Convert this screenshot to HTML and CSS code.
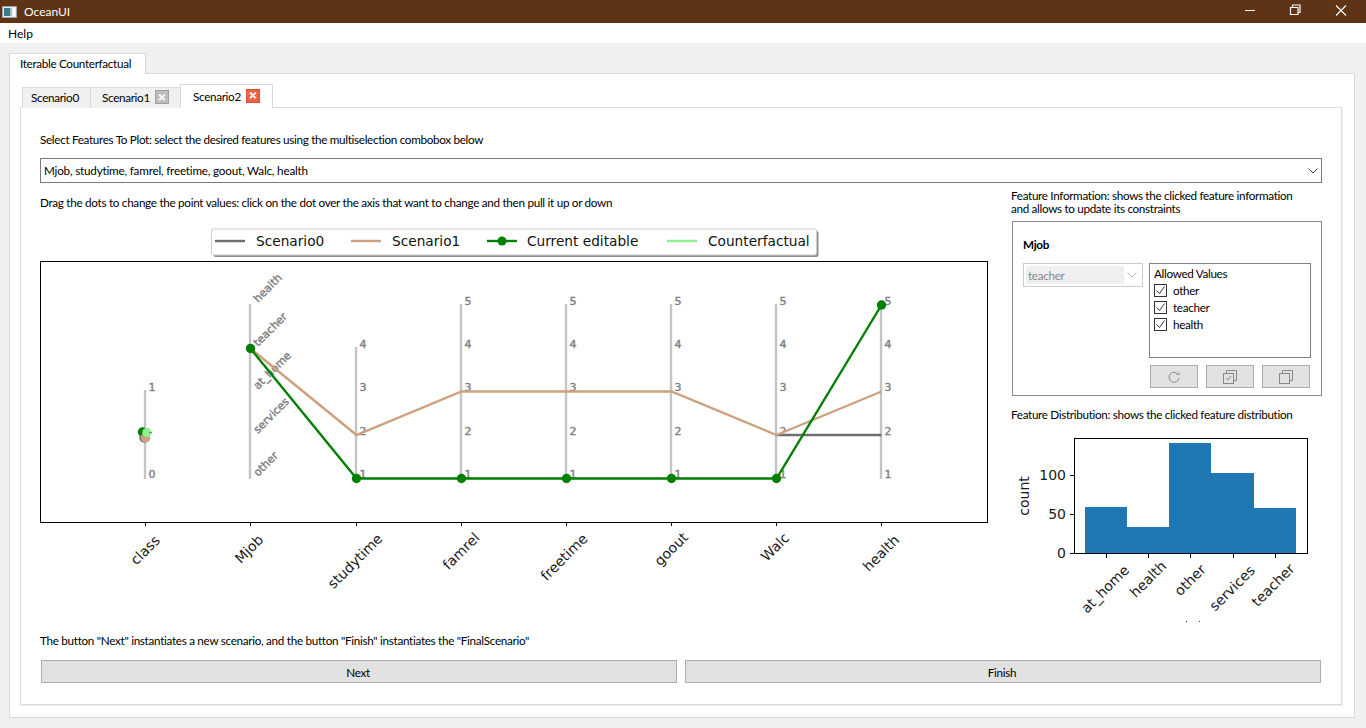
FILE: index.html
```html
<!DOCTYPE html>
<html lang="en">
<head>
  <meta charset="UTF-8">
  <title>OceanUI</title>
  <link rel="stylesheet" href="styles.css">
</head>
<body>
  <!-- Window chrome -->
  <div class="titlebar">
    <svg class="app-icon" width="16" height="14" viewBox="0 0 16 14">
      <rect x="0.5" y="1.5" width="14" height="11" fill="#e8eef0" stroke="#9aa4a8"/>
      <rect x="2" y="3" width="6" height="8" fill="#3d7c86"/>
      <rect x="8" y="3" width="2" height="8" fill="#a9c6c4"/>
      <rect x="11" y="3" width="2" height="8" fill="#ffffff"/>
    </svg>
    <span class="app-name">OceanUI</span>
    <div class="win-controls">
      <svg width="166" height="23" viewBox="0 0 166 23" fill="none" stroke="#fff">
        <path d="M45 10.5h10"/>
        <path d="M90.5 14.5v-7h7.5v7z M92.5 7v-2h7.5v7.5h-2" stroke-width="1.2"/>
        <path d="M136 5.5l10 10M146 5.5l-10 10" stroke-width="1.1"/>
      </svg>
    </div>
  </div>
  <div class="menubar"><span>Help</span></div>

  <div class="main">
    <div class="tab-row">
      <div class="tab outer-tab">Iterable Counterfactual</div>
    </div>
    <div class="outer-pane">
      <div class="tab-row inner-tabs">
        <div class="tab sub-tab first">Scenario0</div>
        <div class="tab sub-tab second">Scenario1<span class="close grey">&#10005;</span></div>
        <div class="tab sub-tab current">Scenario2<span class="close red">&#10005;</span></div>
      </div>
      <div class="inner-pane">
        <p class="label">Select Features To Plot: select the desired features using the multiselection combobox below</p>
        <div class="feature-combo">
          <span>Mjob, studytime, famrel, freetime, goout, Walc, health</span>
          <svg width="10" height="6" viewBox="0 0 10 6" fill="none" stroke="#444"><path d="M0.5 0.5l4.5 4.5 4.5-4.5"/></svg>
        </div>

        <div class="work">
          <div class="plot-col">
            <p class="label">Drag the dots to change the point values: click on the dot over the axis that want to change and then pull it up or down</p>
            <svg class="plot" width="960" height="400" viewBox="40 225 960 400">
              <!-- legend -->
              <rect x="213.5" y="231" width="605" height="26" rx="2" fill="#8f8f8f"/>
              <rect x="211.5" y="229" width="605" height="26" rx="2" fill="#fff" stroke="#ccc"/>
              <path d="M215 241h30" stroke="#6e6e6e" stroke-width="2.4"/>
              <text class="legend-text" x="256" y="246">Scenario0</text>
              <path d="M351 241h30" stroke="#cda07f" stroke-width="2.4"/>
              <text class="legend-text" x="392" y="246">Scenario1</text>
              <path d="M487 241h30" stroke="#008000" stroke-width="2.4"/>
              <circle cx="502" cy="241" r="4.5" fill="#008000"/>
              <text class="legend-text" x="527" y="246">Current editable</text>
              <path d="M667 241h30" stroke="#90f090" stroke-width="2.4"/>
              <text class="legend-text" x="708" y="246">Counterfactual</text>

              <!-- frame and ticks -->
              <rect x="40.5" y="261.5" width="947" height="261" fill="none" stroke="#000"/>
              <path d="M145.5 522v4M250.5 522v4M356.5 522v4M461.5 522v4M566.5 522v4M671.5 522v4M776.5 522v4M881.5 522v4" stroke="#000"/>

              <!-- parallel axes -->
              <g stroke="#c4c4c4" stroke-width="2.4">
                <path d="M145 390v89M250 304v175M356 347v132M461 304v175M566 304v175M671 304v175M776 304v175M881 304v175"/>
              </g>

              <!-- axis values -->
              <g class="axis-text">
                <text x="148.5" y="391">1</text><text x="148.5" y="478">0</text>
                <text x="359.5" y="348">4</text><text x="359.5" y="391">3</text><text x="359.5" y="435">2</text><text x="359.5" y="478">1</text>
                <text x="464.5" y="305">5</text><text x="464.5" y="348">4</text><text x="464.5" y="391">3</text><text x="464.5" y="435">2</text><text x="464.5" y="478">1</text>
                <text x="569.5" y="305">5</text><text x="569.5" y="348">4</text><text x="569.5" y="391">3</text><text x="569.5" y="435">2</text><text x="569.5" y="478">1</text>
                <text x="674.5" y="305">5</text><text x="674.5" y="348">4</text><text x="674.5" y="391">3</text><text x="674.5" y="435">2</text><text x="674.5" y="478">1</text>
                <text x="779.5" y="305">5</text><text x="779.5" y="348">4</text><text x="779.5" y="391">3</text><text x="779.5" y="435">2</text><text x="779.5" y="478">1</text>
                <text x="884.5" y="305">5</text><text x="884.5" y="348">4</text><text x="884.5" y="391">3</text><text x="884.5" y="435">2</text><text x="884.5" y="478">1</text>
                <text transform="translate(258 303) rotate(-45)">health</text>
                <text transform="translate(258 347) rotate(-45)">teacher</text>
                <text transform="translate(258 390) rotate(-45)">at_home</text>
                <text transform="translate(258 434) rotate(-45)">services</text>
                <text transform="translate(258 477) rotate(-45)">other</text>
              </g>

              <!-- scenario lines -->
              <g fill="none" stroke-width="2.4">
                <path d="M776.5 435H881.5" stroke="#6e6e6e"/>
                <path d="M250.5 348.5L356.5 435L461.5 391.5H671.5L776.5 435L881.5 391.5" stroke="#cda07f"/>
                <path d="M250.5 348.5L356.5 478.5H776.5L881.5 305" stroke="#008000"/>
              </g>
              <g fill="#008000">
                <circle cx="250.5" cy="348.5" r="4.7"/><circle cx="356.5" cy="478.5" r="4.7"/><circle cx="461.5" cy="478.5" r="4.7"/>
                <circle cx="566.5" cy="478.5" r="4.7"/><circle cx="671.5" cy="478.5" r="4.7"/><circle cx="776.5" cy="478.5" r="4.7"/>
                <circle cx="881.5" cy="305" r="4.7"/>
              </g>

              <!-- stacked dots on class axis -->
              <circle cx="142.5" cy="432" r="4.7" fill="#008000"/>
              <circle cx="144" cy="438" r="4.7" fill="#6e6e6e"/>
              <circle cx="145.5" cy="438" r="4.7" fill="#cda07f"/>
              <circle cx="147" cy="432.5" r="4.7" fill="#90f090"/>
              <path d="M149 432.5h3" stroke="#808080"/>

              <!-- axis names -->
              <g class="axis-name">
                <text transform="translate(145 550) rotate(-45)">class</text>
                <text transform="translate(249 549) rotate(-45)">Mjob</text>
                <text transform="translate(355 561) rotate(-45)">studytime</text>
                <text transform="translate(461 551) rotate(-45)">famrel</text>
                <text transform="translate(564 557) rotate(-45)">freetime</text>
                <text transform="translate(671 549) rotate(-45)">goout</text>
                <text transform="translate(775 547) rotate(-45)">Walc</text>
                <text transform="translate(881 553) rotate(-45)">health</text>
              </g>
            </svg>
          </div>

          <div class="info-col">
            <p class="label tight">Feature Information: shows the clicked feature information<br>and allows to update its constraints</p>
            <div class="info-box">
              <div class="info-title">Mjob</div>
              <div class="info-row">
                <div class="value-combo">
                  <span class="value-text">teacher</span>
                  <svg width="10" height="6" viewBox="0 0 10 6" fill="none" stroke="#b8b8b8"><path d="M0.5 0.5l4.5 4.5 4.5-4.5"/></svg>
                </div>
                <div class="allowed">
                  <div class="allowed-list">
                    <div class="allowed-head">Allowed Values</div>
                    <label class="check"><span class="box"><svg width="11" height="11" viewBox="0 0 11 11" fill="none" stroke="#333"><path d="M1.5 5.5l3 3 5-7"/></svg></span>other</label>
                    <label class="check"><span class="box"><svg width="11" height="11" viewBox="0 0 11 11" fill="none" stroke="#333"><path d="M1.5 5.5l3 3 5-7"/></svg></span>teacher</label>
                    <label class="check"><span class="box"><svg width="11" height="11" viewBox="0 0 11 11" fill="none" stroke="#333"><path d="M1.5 5.5l3 3 5-7"/></svg></span>health</label>
                  </div>
                  <div class="small-btns">
                    <div class="btn small">
                      <svg width="14" height="14" viewBox="0 0 14 14" fill="none" stroke="#888"><path d="M11.5 5A5 5 0 1 0 12 8"/><path d="M9.5 4.5h3v-2" stroke="#999"/></svg>
                    </div>
                    <div class="btn small">
                      <svg width="14" height="14" viewBox="0 0 14 14" fill="none" stroke="#888"><path d="M3.5 3.5v-3h10v10h-3"/><rect x="0.5" y="3.5" width="10" height="10"/><path d="M3 8l2 2 3-4"/></svg>
                    </div>
                    <div class="btn small">
                      <svg width="14" height="14" viewBox="0 0 14 14" fill="none" stroke="#888"><path d="M3.5 3.5v-3h10v10h-3"/><rect x="0.5" y="3.5" width="10" height="10"/></svg>
                    </div>
                  </div>
                </div>
              </div>
            </div>
            <p class="label dist-label">Feature Distribution: shows the clicked feature distribution</p>
            <svg class="hist" width="310" height="195" viewBox="1012 430 310 195">
              <g fill="#1f77b4">
                <rect x="1085" y="507" width="42" height="46"/>
                <rect x="1127" y="527" width="42" height="26"/>
                <rect x="1169" y="443" width="42" height="110"/>
                <rect x="1211" y="473" width="43" height="80"/>
                <rect x="1254" y="508" width="42" height="45"/>
              </g>
              <rect x="1074.5" y="438.5" width="233" height="115" fill="none" stroke="#000"/>
              <path d="M1070 553.5h4M1070 514.5h4M1070 475.5h4M1106.5 554v4M1148.5 554v4M1190.5 554v4M1233.5 554v4M1275.5 554v4" stroke="#000"/>
              <g class="axis-name">
                <text class="end" x="1066" y="558">0</text>
                <text class="end" x="1066" y="519">50</text>
                <text class="end" x="1066" y="480">100</text>
                <text transform="translate(1024 496) rotate(-90)">count</text>
                <text transform="translate(1105 589) rotate(-45)">at_home</text>
                <text transform="translate(1148 579) rotate(-45)">health</text>
                <text transform="translate(1190 580) rotate(-45)">other</text>
                <text transform="translate(1232 588) rotate(-45)">services</text>
                <text transform="translate(1273 585) rotate(-45)">teacher</text>
              </g>
              <path d="M1186 621.5h1M1199 621.5h1" stroke="#333"/>
            </svg>
          </div>
        </div>

        <p class="label note">The button "Next" instantiates a new scenario, and the button "Finish" instantiates the "FinalScenario"</p>
        <div class="actions">
          <div class="btn action">Next</div>
          <div class="btn action">Finish</div>
        </div>
      </div>
    </div>
  </div>
</body>
</html>
```

FILE: styles.css
```css
* {
  box-sizing: border-box;
}

html, body {
  height: 100%;
}

body {
  margin: 0;
  display: flex;
  flex-direction: column;
  overflow: hidden;
  background: #f0f0f0;
  color: #000;
  font-family: Lato, "Open Sans", sans-serif;
  font-size: 11.7px;
  letter-spacing: -0.32px;
}

p {
  margin: 0;
}

svg {
  display: block;
}

/* window chrome */
.titlebar {
  height: 23px;
  display: flex;
  align-items: center;
  background: #5e3316;
  color: #fff;
  padding-left: 2px;
}

.app-icon {
  margin-right: 6px;
}

.app-name {
  font-size: 12px;
  letter-spacing: 0;
}

.win-controls {
  margin-left: auto;
}

.menubar {
  height: 20px;
  background: #fff;
  padding-left: 8px;
  font-size: 12px;
  letter-spacing: 0;
  line-height: 21px;
}

/* tabs */
.main {
  flex: 1;
  display: flex;
  flex-direction: column;
  padding: 10px 11px 10px 9px;
}

.tab-row {
  display: flex;
  align-items: flex-end;
}

.tab {
  display: flex;
  align-items: center;
  background: #f0f0f0;
  border: 1px solid #d9d9d9;
  border-bottom: none;
}

.outer-tab {
  width: 137px;
  height: 21px;
  margin-bottom: -1px;
  padding: 0 0 2px 10px;
  background: #fff;
  position: relative;
  z-index: 1;
}

.outer-pane {
  flex: 1;
  display: flex;
  flex-direction: column;
  background: #fff;
  border: 1px solid #d9d9d9;
  padding: 10px 12px 12px 10px;
}

.inner-tabs {
  height: 24px;
  margin-bottom: -1px;
  padding-left: 2px;
  position: relative;
  z-index: 1;
}

.sub-tab {
  height: 21px;
  padding-bottom: 2px;
  margin-left: -1px;
}

.sub-tab.first {
  width: 69px;
  margin-left: 0;
  padding-left: 8px;
}

.sub-tab.second {
  width: 91px;
  padding-left: 11px;
}

.sub-tab.current {
  width: 93px;
  height: 24px;
  padding-left: 12px;
  padding-bottom: 2px;
  background: #fff;
}

.close {
  width: 14px;
  height: 14px;
  margin-left: 5px;
  display: flex;
  align-items: center;
  justify-content: center;
  color: #fff;
  font-size: 10px;
  font-weight: 700;
  font-family: "DejaVu Sans", sans-serif;
  -webkit-text-stroke: 0.5px #fff;
}

.close.grey {
  background: #bdbdbd;
  border: 1px solid #a0a0a0;
}

.close.red {
  background: #e8654a;
  border: 1px solid #d9502f;
}

.inner-pane {
  flex: 1;
  background: #fff;
  border: 1px solid #dcdcdc;
  box-shadow: 1px 1px 0 #ececec;
  padding: 24px 19px 0 19px;
}

.label {
  line-height: 15px;
  padding-bottom: 1px;
  white-space: nowrap;
}

.label.tight {
  line-height: 13px;
  padding-bottom: 0;
  margin-top: -1px;
}

.feature-combo {
  height: 25px;
  margin-top: 10px;
  display: flex;
  align-items: center;
  justify-content: space-between;
  padding: 0 3px;
  border: 1px solid #7a7a7a;
}

.feature-combo span {
  letter-spacing: -0.2px;
  padding-bottom: 2px;
}

/* plot and info columns */
.work {
  display: flex;
  justify-content: space-between;
  height: 435px;
  margin-top: 7px;
}

.plot-col {
  padding-top: 5px;
}

.plot-col .label {
  letter-spacing: -0.29px;
}

.plot {
  margin-top: 14px;
  font-family: "DejaVu Sans", sans-serif;
  letter-spacing: 0;
}

.legend-text {
  font-size: 13.7px;
  fill: #111;
}

.axis-text text {
  font-size: 11px;
  fill: #808080;
  stroke: #808080;
  stroke-width: 0.4px;
}

.axis-name text {
  font-size: 14px;
  fill: #1a1a1a;
  text-anchor: middle;
  dominant-baseline: central;
}

.axis-name text.end {
  text-anchor: end;
  dominant-baseline: auto;
}

.info-col {
  width: 310px;
}

.info-col .label {
  margin-left: -1px;
}

.info-box {
  height: 175px;
  margin-top: 6px;
  padding: 14px 10px 0 10px;
  border: 1px solid #8a8a8a;
}

.info-title {
  font-weight: 700;
  line-height: 16px;
}

.info-row {
  display: flex;
  align-items: flex-start;
  gap: 6px;
  margin-top: 11px;
}

.value-combo {
  width: 120px;
  height: 24px;
  display: flex;
  align-items: center;
  justify-content: space-between;
  padding: 2px 5px 2px 2px;
  border: 1px solid #ccc;
}

.value-text {
  width: 98px;
  height: 100%;
  line-height: 19px;
  padding-left: 2px;
  background: #efefef;
  color: #888;
}

.allowed {
  width: 162px;
}

.allowed-list {
  height: 95px;
  padding: 1px 4px;
  border: 1px solid #828282;
}

.allowed-head {
  line-height: 16px;
}

.check {
  display: flex;
  align-items: center;
  height: 17px;
  padding-top: 1px;
}

.box {
  width: 13px;
  height: 13px;
  margin-right: 6px;
  border: 1px solid #333;
  background: #fff;
}

.btn {
  display: flex;
  align-items: center;
  justify-content: center;
  background: #e1e1e1;
  border: 1px solid #adadad;
}

.small-btns {
  display: flex;
  gap: 8px;
  margin: 7px 0 0 1px;
}

.btn.small {
  width: 48px;
  height: 23px;
}

.label.dist-label {
  margin-top: 11px;
  padding-bottom: 0;
  line-height: 14px;
}

.hist {
  margin-top: 9px;
  font-family: "DejaVu Sans", sans-serif;
  letter-spacing: 0;
}

/* bottom */
.note {
  margin-top: 8px;
  letter-spacing: -0.3px;
}

.actions {
  display: flex;
  gap: 8px;
  margin-top: 11px;
  padding: 0 1px;
}

.btn.action {
  flex: 1;
  height: 23px;
  padding-right: 2px;
}
```
